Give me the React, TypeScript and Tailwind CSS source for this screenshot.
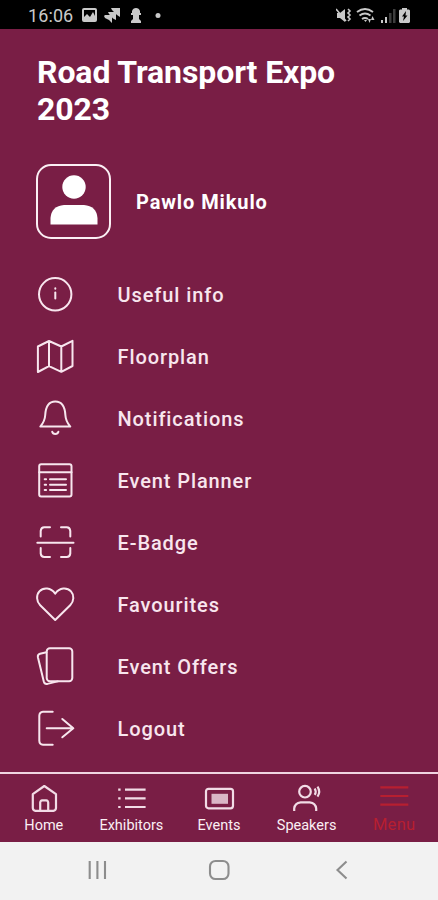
import type { ReactNode } from "react";
import clsx from "clsx";

interface MenuEntry {
  label: string;
  icon: ReactNode;
}

interface TabEntry extends MenuEntry {
  active?: boolean;
}

const MENU: MenuEntry[] = [
  {
    label: "Useful info",
    icon: (
      <>
        <circle cx="20.2" cy="19.3" r="16.2" />
        <path d="M20.3 17.5v6" />
        <path d="M20.3 13.2v.6" />
      </>
    ),
  },
  {
    label: "Floorplan",
    icon: <path d="M2.9 9.5 14 4l12.3 5.5L37.5 3.8V29L26.3 34.8 14 29.2 2.9 35ZM14 4v25M26.3 9.5v25" />,
  },
  {
    label: "Notifications",
    icon: (
      <>
        <path d="M5.3 27.6c2.9-3.3 4.6-6.3 4.9-11.3C10.6 8 13.8 2.4 20.3 2.4S30 8 30.4 16.3c.3 5 2 8 4.9 11.3Z" />
        <path d="M17.2 32.8c.7 2.9 5.5 2.9 6.2 0" />
      </>
    ),
  },
  {
    label: "Event Planner",
    icon: (
      <>
        <rect x="4.2" y="3.2" width="32.3" height="32.3" rx="2" />
        <path d="M4.2 11.3h32.3M15 18.3h16M15 23.7h16M15 29h16" />
        <path d="M9.7 18.3h1.4M9.7 23.7h1.4M9.7 29h1.4" />
      </>
    ),
  },
  {
    label: "E-Badge",
    icon: (
      <>
        <path d="M15 4.3H9.2q-3 0-3.5 3.5v5.8M26 4.3h5.8q3 0 3.5 3.5v5.8M5.7 25v5.5q.5 3.5 3.5 3.5H15M35.3 25v5.5q-.5 3.5-3.5 3.5H26" />
        <path d="M2.3 19.7h36.2" />
      </>
    ),
  },
  {
    label: "Favourites",
    icon: (
      <path d="M20.2 35 5.2 20.3C1.3 16.4 1.1 10 4.4 6.4c4-4.3 11.4-4.1 15.8 2.3 4.4-6.4 11.8-6.6 15.8-2.3 3.3 3.6 3.1 10-.8 13.9Z" />
    ),
  },
  {
    label: "Event Offers",
    icon: (
      <>
        <rect x="11.7" y="1.3" width="25.6" height="33" rx="3.2" />
        <path d="M11.5 5.3 5 6.8Q2.4 7.6 2.9 10.2L8.8 34.5q.8 3 3.6 2.4l10.4-2.5" />
      </>
    ),
  },
  {
    label: "Logout",
    icon: <path d="M17.7 2.7H8q-3.6.4-3.7 4v25q.1 3.7 3.7 4h9.7M11.7 19.3H38M27.3 10l11 9.3-11 9" />,
  },
];

const TABS: TabEntry[] = [
  {
    label: "Home",
    icon: <path d="M16.3 4 28 12.2v14q-.3 2.3-2.6 2.6H7.4q-2.3-.3-2.6-2.6v-14ZM12.2 28.5v-8q.2-2 2-2.2h4q1.8.2 2 2.2v8" />,
  },
  {
    label: "Exhibitors",
    icon: <path d="M3.2 7.7h2.4M3.2 16.3h2.4M3.2 25h2.4M10 7.7h20.6M10 16.3h20.6M10 25h20.6" />,
  },
  {
    label: "Events",
    icon: (
      <>
        <rect x="3" y="6.8" width="27" height="19.5" rx="2.5" />
        <rect x="8.5" y="11.8" width="16.5" height="10" fill="currentColor" stroke="none" opacity="0.8" />
      </>
    ),
  },
  {
    label: "Speakers",
    icon: (
      <>
        <circle cx="14" cy="9.7" r="5.8" />
        <path d="M3.2 29v-2.5q.6-5.6 6.5-6.2h9q5.9.6 6.5 6.2V29" />
        <path d="M23.700 6.500q2 3.200 0 6.400M26.500 4.700q3.400 5 0 10" />
      </>
    ),
  },
  {
    label: "Menu",
    icon: <path d="M2.3 5.3h28M2.3 14h28M2.3 22.7h28" />,
    active: true,
  },
];

function StatusBar() {
  return (
    <header className="flex h-[29px] shrink-0 items-center bg-black pl-7 pr-[26px] pt-0.5 text-[#c9c9c9]">
      <span className="w-[53px] text-lg leading-none tracking-[0.1px]">16:06</span>
      <svg width="86" height="18" viewBox="0 0 86 18" fill="currentColor">
        <path fillRule="evenodd" d="M3 1h11q2 0 2 2v10q0 2-2 2H3q-2 0-2-2V3q0-2 2-2ZM3 3v7l3-3 3 3 3-5 2 4V3Z" />
        {/* three stacked arrow heads */}
        <path d="M30 1h9v9l-3-2-5-5ZM27 5h8v8l-3-1.500-4-4.500ZM24 8h7v8l-3-3-4-2-1-2Z" />
        <path d="M51 4q1-3 4-3t4 3v2h1v2h-2v4l2 2v2H50v-2l2-2V8h-2V6h1Z" />
        <circle cx="77" cy="8.5" r="2.5" />
      </svg>
      <svg className="ml-auto" width="76" height="18" viewBox="0 0 76 18" fill="currentColor">
        <path d="M1 6h3l5-4v13l-5-4H1Z" />
        <path d="m0 2 10 12M12 2l2 2-2 2 2 2-2 2 2 2-2 2" fill="none" stroke="currentColor" strokeWidth="1.6" />
        <path d="M21 5q8-6 16 0M23.5 8.5q5.5-4 11 0M26 12q3-2 6 0" fill="none" stroke="currentColor" strokeWidth="1.9" />
        <path d="M28 13h3l-1.5 2ZM32 12h3l-1.500 4ZM35 13l1.500-4 2 4Z" />
        <path d="M45 13h2v3h-2ZM49 10h2v6h-2Z" />
        <path d="M53 6h2.500v10H53ZM57 2h2.500v14H57Z" opacity="0.3" />
        <path fillRule="evenodd" d="M66 1h5v1.500h2l1 1V15l-1 1h-9l-1-1V3.500l1-1h2ZM70 4l-4 5.500h2L67 14l4.500-5.500h-2Z" />
      </svg>
    </header>
  );
}

function MenuRow({ label, icon }: MenuEntry) {
  return (
    <li className="flex h-[62px] items-center">
      <svg
        width="40"
        height="40"
        viewBox="0 0 40 40"
        fill="none"
        stroke="currentColor"
        strokeWidth="2"
        strokeLinecap="round"
        strokeLinejoin="round"
      >
        {icon}
      </svg>
      <span className="ml-[42.5px] text-xl font-medium leading-none tracking-[0.9px]">{label}</span>
    </li>
  );
}

function Tab({ label, icon, active }: TabEntry) {
  return (
    <button className={clsx("flex flex-1 flex-col items-center pt-2", active ? "text-[#b71f30]" : "text-[#f2dce6]")}>
      <svg
        width="32"
        height="32"
        viewBox="0 0 32 32"
        fill="none"
        stroke="currentColor"
        strokeWidth="2.2"
        strokeLinejoin="round"
      >
        {icon}
      </svg>
      <span
        className={clsx(
          "whitespace-nowrap leading-[18px]",
          active ? "mt-0.5 text-[16.5px] tracking-[0.3px]" : "mt-[3px] text-[14.5px] text-[#fbeff4]"
        )}
      >
        {label}
      </span>
    </button>
  );
}

export default function App() {
  return (
    <div className="flex h-[900px] w-[438px] flex-col overflow-hidden bg-[#791e45] font-['Roboto',sans-serif]">
      <StatusBar />

      <main className="flex flex-1 flex-col text-white">
        <h1 className="ml-[37px] mt-[25px] w-[340px] text-[32px] font-bold leading-[37px] tracking-[-0.1px]">
          Road Transport Expo 2023
        </h1>

        {/* Profile */}
        <div className="ml-9 mt-9 flex items-center">
          <div className="flex h-[75px] w-[75px] justify-center rounded-[15px] border-2 border-[#fbeff4] pt-[9px]">
            <svg width="48" height="50" viewBox="0 0 48 50" fill="currentColor">
              <circle cx="24" cy="12" r="11.7" />
              <path d="M0.5 49.5V43Q1.5 31 14 30h20q12.5 1 13.500 13v6.500Z" />
            </svg>
          </div>
          <span className="ml-[25px] mt-px text-xl font-bold leading-none tracking-[0.9px]">Pawlo Mikulo</span>
        </div>

        <ul className="ml-[35px] mt-[25px] text-[#f8e6ee]">
          {MENU.map((item) => (
            <MenuRow key={item.label} {...item} />
          ))}
        </ul>
      </main>

      {/* Tab bar */}
      <nav className="flex h-[70px] shrink-0 border-t-2 border-[#f0d5e1]">
        {TABS.map((tab) => (
          <Tab key={tab.label} {...tab} />
        ))}
      </nav>

      {/* System navigation */}
      <footer className="flex h-[58px] shrink-0 justify-center gap-[97px] bg-[#f2f2f2] pt-4">
        {[
          <path key="recents" d="M4.7 3v18M12.4 3v18M20 3v18" />,
          <rect key="home" x="3" y="3" width="18.5" height="18" rx="5.5" />,
          <path key="back" d="M17.5 3.5 8.5 12l9 8.5" />,
        ].map((shape, i) => (
          <svg key={i} width="25" height="24" viewBox="0 0 25 24" fill="none" stroke="#8d8d8d" strokeWidth="2.1">
            {shape}
          </svg>
        ))}
      </footer>
    </div>
  );
}
